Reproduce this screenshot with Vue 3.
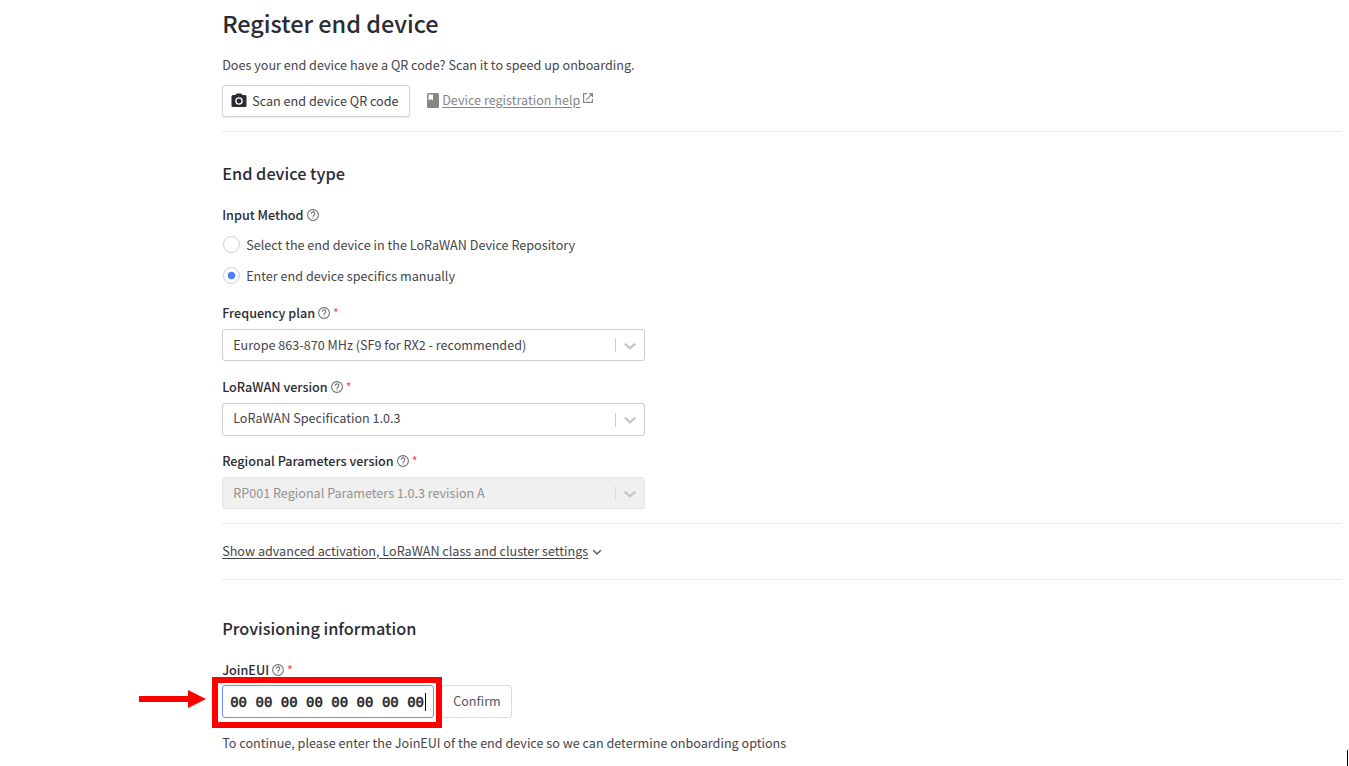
<script setup>
const selects = [
  { label: 'Frequency plan', value: 'Europe 863-870 MHz (SF9 for RX2 - recommended)', key: 'freq' },
  { label: 'LoRaWAN version', value: 'LoRaWAN Specification 1.0.3', key: 'lorawan' },
  { label: 'Regional Parameters version', value: 'RP001 Regional Parameters 1.0.3 revision A', key: 'regional', disabled: true },
]
</script>

<template>
  <main class="page">
    <h1><span>Register end device</span></h1>
    <p class="intro"><span>Does your end device have a QR code? Scan it to speed up onboarding.</span></p>
    <div class="actions">
      <button class="btn scan">
        <svg class="camera" viewBox="0 0 24 24"><path fill="#2b2b33" fill-rule="evenodd" d="M9 2 7.200 4H4a2 2 0 0 0-2 2v12a2 2 0 0 0 2 2h16a2 2 0 0 0 2-2V6a2 2 0 0 0-2-2h-3.200L15 2zM12 17a5 5 0 1 1 0-10 5 5 0 0 1 0 10z" /><circle cx="12" cy="12" r="3.200" fill="#2b2b33" /></svg>
        <span>Scan end device QR code</span>
      </button>
      <a class="help">
        <svg class="book" viewBox="0 0 12 15"><path fill="#868686" fill-rule="evenodd" d="M1.500 0h9A1.500 1.500 0 0 1 12 1.500v12a1.500 1.500 0 0 1-1.500 1.500h-9A1.500 1.500 0 0 1 0 13.500v-12A1.500 1.500 0 0 1 1.500 0zM1.500 1.500V7.500L3.700 6 6 7.500V1.500z" /></svg>
        <span class="help-text">Device registration help</span>
        <svg class="ext" viewBox="0 0 12 12" fill="none" stroke="#868686" stroke-width="1.200"><path d="M5 1.600H1.600v8.800h8.800V7M7 1.600h3.400V5M10.400 1.600 4.200 7.800" /></svg>
      </a>
    </div>
    <hr />
    <h2 class="type-title"><span>End device type</span></h2>
    <div class="label method">
      <span>Input Method</span>
      <svg class="q" viewBox="0 0 12 12"><circle cx="6" cy="6" r="5.400" /><path d="M4.200 4.900a1.800 1.800 0 1 1 2.800 1.300C6.300 6.700 6 6.900 6 7.700M6 8.500v1.100" /></svg>
    </div>
    <div class="radio r1"><i></i><span>Select the end device in the LoRaWAN Device Repository</span></div>
    <div class="radio r2"><i class="on"></i><span>Enter end device specifics manually</span></div>

    <section v-for="s in selects" :key="s.key" class="field" :class="s.key">
      <div class="label">
        <span>{{ s.label }}</span>
        <svg class="q" viewBox="0 0 12 12"><circle cx="6" cy="6" r="5.400" /><path d="M4.200 4.900a1.800 1.800 0 1 1 2.800 1.300C6.300 6.700 6 6.900 6 7.700M6 8.500v1.100" /></svg>
        <b class="req">*</b>
      </div>
      <div class="select" :class="{ disabled: s.disabled }">
        <span class="value"><span>{{ s.value }}</span></span>
        <i class="sep"></i>
        <svg class="chev" viewBox="0 0 12 8"><path d="M.8 1.600 6 6.200l5.200-4.600" /></svg>
      </div>
    </section>

    <hr class="hr2" />
    <div class="advanced">
      <span>Show advanced activation, LoRaWAN class and cluster settings</span>
      <svg viewBox="0 0 10 7"><path d="M1.200 1.300 5 5l3.800-3.700" fill="none" stroke="#5a5a60" stroke-width="1.500" /></svg>
    </div>
    <hr class="hr3" />
    <h2 class="prov"><span>Provisioning information</span></h2>
    <div class="label join">
      <span>JoinEUI</span>
      <svg class="q" viewBox="0 0 12 12"><circle cx="6" cy="6" r="5.400" /><path d="M4.200 4.900a1.800 1.800 0 1 1 2.800 1.300C6.300 6.700 6 6.900 6 7.700M6 8.500v1.100" /></svg>
      <b class="req">*</b>
    </div>
    <div class="eui-row">
      <div class="eui"><span>00 00 00 00 00 00 00 00</span><i class="caret"></i></div>
      <button class="btn confirm"><span>Confirm</span></button>
      <div class="highlight"></div>
      <svg class="arrow" viewBox="0 0 67 18"><path fill="#f00" d="M0 6h49V0l18 9-18 9v-6H0z" /></svg>
    </div>
    <p class="hint"><span>To continue, please enter the JoinEUI of the end device so we can determine onboarding options</span></p>
    <i class="edge"></i>
  </main>
</template>

<style>
html, body { background: #fff; overflow: hidden; }
</style>

<style scoped>
* { box-sizing: border-box; }
.page {
  position: relative;
  width: 1349px;
  height: 766px;
  padding: 0 7px 0 222.200px;
  overflow: hidden;
  color: #45454b;
  font: 400 12.620px/20px "Noto Sans CJK SC", "Noto Sans", sans-serif;
  white-space: nowrap;
}
h1, h2, p { margin: 0; }
h1 { height: 50px; color: #2b2b33; font-size: 23.450px; font-weight: 500; line-height: 46px; }
h2 { height: 24px; color: #2b2b33; font-size: 16.320px; font-weight: 500; line-height: 22px; }
hr { height: 1px; margin: 0; border: 0; background: #ebebeb; }
.intro { height: 35px; padding-top: 5px; }
.actions { display: flex; height: 46px; }
.btn {
  display: flex;
  align-items: center;
  height: 33px;
  padding: 0;
  border: 1px solid #d2d2d2;
  border-radius: 3px;
  background: #fff;
  color: #3c3c43;
  font: inherit;
}
.scan { width: 188px; height: 32px; padding: 0 0 0 7px; box-shadow: 0 1px 1px #00000012; }
.camera { width: 18px; height: 18px; margin-right: 4px; }
.help { display: flex; height: 30px; margin-left: 17px; align-items: center; color: #868686; }
.book { width: 12px; height: 15px; margin: 1px 3px 0 0; }
.help-text { text-decoration: underline; text-underline-offset: 2px; }
.ext { width: 12px; height: 12px; margin: -4px 0 0 2px; }
.type-title { margin-top: 30px; }
.label { display: flex; align-items: center; height: 20px; color: #2b2b33; font-weight: 500; }
.method { margin-top: 19px; }
.q { width: 12px; height: 12px; margin-left: 3px; fill: none; stroke: #6c6c6c; stroke-width: 1.050; }
.req { height: 20px; margin-left: 3px; color: #f44; font-weight: 400; }
.radio { display: flex; align-items: center; height: 20px; gap: 6px; padding-left: 1px; }
.radio i { width: 17px; height: 17px; border: 1px solid #ccc; border-radius: 50%; }
.radio span { padding-top: 2px; }
.radio i.on { background: radial-gradient(circle, #4d80ff 3.400px, #fff 4.200px); }
.r1 { margin-top: 9px; }
.r2 { margin: 11px 0 28px; }
.field { height: 74px; margin: 0; }
.select {
  display: flex;
  align-items: center;
  width: 423px;
  height: 32px;
  margin-top: 6px;
  padding: 0 8px 0 10px;
  border: 1px solid #ccc;
  border-radius: 3px;
}
.r2 + .field { margin-top: -10px; }
.value { flex: 1; }
.sep { width: 1px; height: 14px; margin-right: 8px; background: #ccc; }
.chev { width: 12px; height: 8px; margin-top: 1px; fill: none; stroke: #c4c4c4; stroke-width: 2.200; }
.disabled { background: #f0f0f0; border-color: #e4e4e4; color: #929292; }
.disabled .sep { background: #dfdfdf; }
.lorawan .select { height: 33px; }
.lorawan .value { padding-bottom: 3px; }
.lorawan .chev { margin-top: 0; }
.hr2 { margin-top: -2px; }
.advanced { display: flex; align-items: center; height: 55px; }
.advanced span { margin-top: -2px; text-decoration: underline; text-underline-offset: 2px; }
.advanced svg { width: 10px; height: 7px; margin: 2px 0 0 4px; }
.prov { margin-top: 37px; }
.join { margin-top: 19px; }
.eui-row { position: relative; display: flex; height: 33px; margin-top: 5px; gap: 7px; }
.eui {
  display: flex;
  align-items: center;
  width: 212px;
  padding-left: 7px;
  border: 1px solid #6b91ff;
  border-radius: 3px;
  color: #222;
  font: 400 14px/20px "DejaVu Sans Mono", monospace;
  -webkit-text-stroke: 0.5px #222;
}
.caret { width: 1px; height: 18px; margin-left: 1px; background: #000; }
.confirm { width: 71px; padding-left: 11px; border-color: #dcdcdc; color: #56565c; }
.confirm span { margin-top: -1px; }
.highlight { position: absolute; left: -10px; top: -8px; width: 230px; height: 51px; border: 6px solid #f00; }
.arrow { position: absolute; left: -83px; top: 5px; width: 67px; height: 18px; }
.hint { margin-top: 15px; }
.edge { position: absolute; right: 1px; bottom: 0; width: 1px; height: 16px; background: #000; }
</style>
